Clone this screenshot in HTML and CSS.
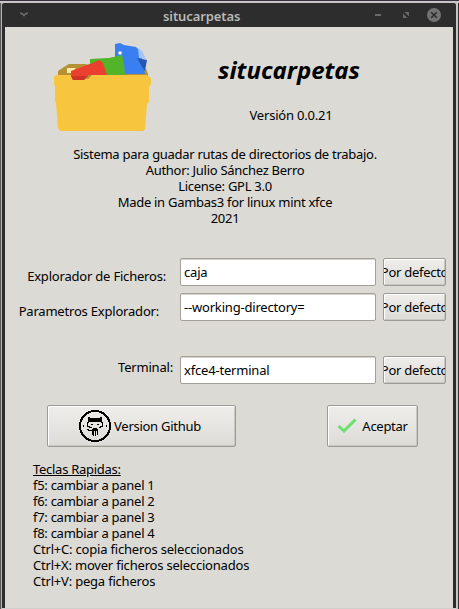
FILE: index.html
```
<!DOCTYPE html>
<html lang="es">
<head>
<meta charset="utf-8">
<title>situcarpetas</title>
<link rel="stylesheet" href="styles.css">
</head>
<body>
<div class="desktop">
  <main class="window">
    <header class="titlebar">
      <svg class="menu" width="10" height="6" viewBox="0 0 10 6"><path d="M1 1.2 Q3 1.2 5 3.4 Q7 1.2 9 1.2" fill="none" stroke="#686868" stroke-width="1.8"/></svg>
      <h1 class="title">situcarpetas</h1>
      <svg class="controls" width="70" height="16" viewBox="0 0 70 16">
        <rect x="4" y="7" width="6" height="2" fill="#686868"/>
        <path d="M33.500 5H38v4.500zM32 6.500v4.500h4.500z" fill="#686868"/>
        <circle cx="63" cy="8" r="7" fill="#727272"/>
        <path d="M60.2 5.200l5.600 5.600M65.800 5.200l-5.600 5.600" stroke="#2d2d2d" stroke-width="1.600"/>
      </svg>
    </header>
    <section class="content">
      <div class="hero">
        <svg class="folder" width="98" height="88" viewBox="0 0 98 88">
          <path d="M4 31V28L10 24L15 21H31L40 23L92 26L94 31V36H4z" fill="#b59034"/>
          <path d="M13 25h9l-4 5h-5z" fill="#fce9a5"/>
          <path d="M61 14V1l5-1 4 2 12 2 5 5 4 22H61z" fill="#397ff1"/>
          <path d="M84 5l4 3 4 8-7-1z" fill="#a3c4fb"/>
          <path d="M83 15l10 2-2 11-3-4z" fill="#2458b4"/>
          <path d="M36 20v-4l19-1 13-3 2 8 1 12H40z" fill="#53b329"/>
          <circle cx="66" cy="10" r="1.800" fill="#fff"/>
          <path d="M0 34l2-2h15l17 4 4-4h55l4 3v6l-2 3v15l-2 2-2 25-2 2H6l-2-3-2-25-1-2V43l-1-2z" fill="#f7c53e"/>
          <path d="M17 28l24-9 4-2 4 3 4 12H34l-4 5H19l-2-4z" fill="#eb4030"/>
          <path d="M17 33h17l-4 4H19z" fill="#cf3429"/>
        </svg>
        <div class="heading">
          <h2 class="name">situcarpetas</h2>
          <p class="version">Versión 0.0.21</p>
        </div>
      </div>
      <div class="about">
        <p>Sistema para guadar rutas de directorios de trabajo.</p>
        <p>Author: Julio Sánchez Berro</p>
        <p>License: GPL 3.0</p>
        <p>Made in Gambas3 for linux mint xfce</p>
        <p>2021</p>
      </div>
      <form class="settings">
        <div class="row explorer"><label for="fm">Explorador de Ficheros:</label><input id="fm" value="caja"><button type="button"><span>Por defecto</span></button></div>
        <div class="row params"><label for="pr">Parametros Explorador:</label><input id="pr" value="--working-directory="><button type="button"><span>Por defecto</span></button></div>
        <div class="row terminal"><label for="tm">Terminal:</label><input id="tm" value="xfce4-terminal"><button type="button"><span>Por defecto</span></button></div>
      </form>
      <div class="actions">
        <button class="github" type="button">
          <svg width="32" height="32" viewBox="0 0 32 32" shape-rendering="crispEdges">
            <circle cx="16" cy="16" r="15" fill="none" stroke="#000" stroke-width="2"/>
            <path d="M9 7h2v1h10V7h2v5H9z" fill="#000"/>
            <path d="M9.500 12l-1 1v3l2 1h2M22.500 12l1 1v3l-2 1h-2" fill="none" stroke="#000"/>
            <path d="M12 14h2v1h-2zM18 14h2v1h-2zM4 15h1v2H4zM27 15h1v2h-1zM8 19h2v1h3v1H9z" fill="#000"/>
            <path d="M14 18h4v1h1v6h-1v1h-4v-1h-1v-6h1z" fill="#000"/>
            <path d="M15 21h1v5h-1zM17 21h1v5h-1z" fill="#e8e7e3"/>
          </svg>
          <span>Version Github</span>
        </button>
        <button class="accept" type="button">
          <svg width="20" height="16" viewBox="0 0 20 16"><path d="M1.500 8L7 13 18.500 1.500" fill="none" stroke="#6be06f" stroke-width="3"/></svg>
          <span>Aceptar</span>
        </button>
      </div>
      <div class="keys">
        <p><u>Teclas Rapidas:</u></p>
        <p>f5: cambiar a panel 1</p>
        <p>f6: cambiar a panel 2</p>
        <p>f7: cambiar a panel 3</p>
        <p>f8: cambiar a panel 4</p>
        <p class="combo">Ctrl+C: copia ficheros seleccionados</p>
        <p class="combo">Ctrl+X: mover ficheros seleccionados</p>
        <p class="combo">Ctrl+V: pega ficheros</p>
      </div>
    </section>
  </main>
</div>
</body>
</html>
```
FILE: styles.css
```
* { box-sizing: border-box; margin: 0; padding: 0; }
body { width: 459px; height: 609px; overflow: hidden; font: 13px/16px "Noto Sans", sans-serif; letter-spacing: -.28px; color: #000; }
.desktop { height: 609px; padding: 3px 3px 1px 2px; background: linear-gradient(#38343f 0 1px, #c7c5c6 1px 3px, transparent 3px), linear-gradient(90deg, #555 0 1px, #b5b5b3 1px 2px, #d0cfcb 2px 456px, #c7c5c6 456px 458px, #303030 458px); }
.window { height: 605px; background: #2d2d2d; padding: 0 3px; border-radius: 2px 2px 0 0; }
.titlebar { height: 24px; display: flex; align-items: center; padding: 0 12px 0 14px; }
.title { font-size: 13px; font-weight: 600; line-height: 24px; color: #b9b9b7; letter-spacing: -.1px; padding-top: 2px; margin-left: 134px; }
.controls { margin-left: auto; }
.content { height: 581px; background: #dbdad5; }
.hero { height: 119px; display: flex; padding: 16px 0 0 49px; }
.heading { width: 250px; text-align: center; margin-left: 14px; }
.name { font-size: 24px; line-height: 30px; font-style: italic; font-weight: 700; letter-spacing: 0; margin: 12px 0 0 -4px; }
.version { margin-top: 22px; letter-spacing: -.2px; }
p { white-space: nowrap; }
.about { text-align: center; height: 112px; padding-right: 8px; }
.settings { height: 132px; }
.row { display: flex; }
.row label { width: 175px; padding-right: 14px; padding-top: 10px; text-align: right; letter-spacing: -.2px; white-space: nowrap; }
.row.params { margin-top: 7px; }
.row.terminal { margin-top: 35px; }
.row.params label { padding-right: 21px; }
.row.terminal label { padding-right: 7px; padding-top: 3px; }
input { width: 196px; height: 28px; padding: 0 3px; border: 1px solid #a5a198; border-radius: 2px; box-shadow: inset 0 1px #d5d3cc; background: #fff; font: inherit; letter-spacing: -.19px; color: #000; }
button { display: flex; align-items: center; justify-content: center; border: 1px solid #9d9b95; border-radius: 2px; box-shadow: inset 1px 1px #fff, inset -1px -1px #c9c7c1; background: linear-gradient(#efeeeb, #dcdbd6); font: inherit; letter-spacing: inherit; color: #000; white-space: nowrap; overflow: hidden; }
.row button { width: 63px; height: 28px; margin-left: 7px; }
.actions { display: flex; padding: 15px 0 0 42px; height: 71px; }
.actions button { height: 42px; }
.github { width: 189px; gap: 3px; padding-right: 3px; }
.accept { width: 91px; gap: 5px; margin-left: 91px; }
.keys { padding-left: 28px; }
.combo { letter-spacing: -.2px; }
```
